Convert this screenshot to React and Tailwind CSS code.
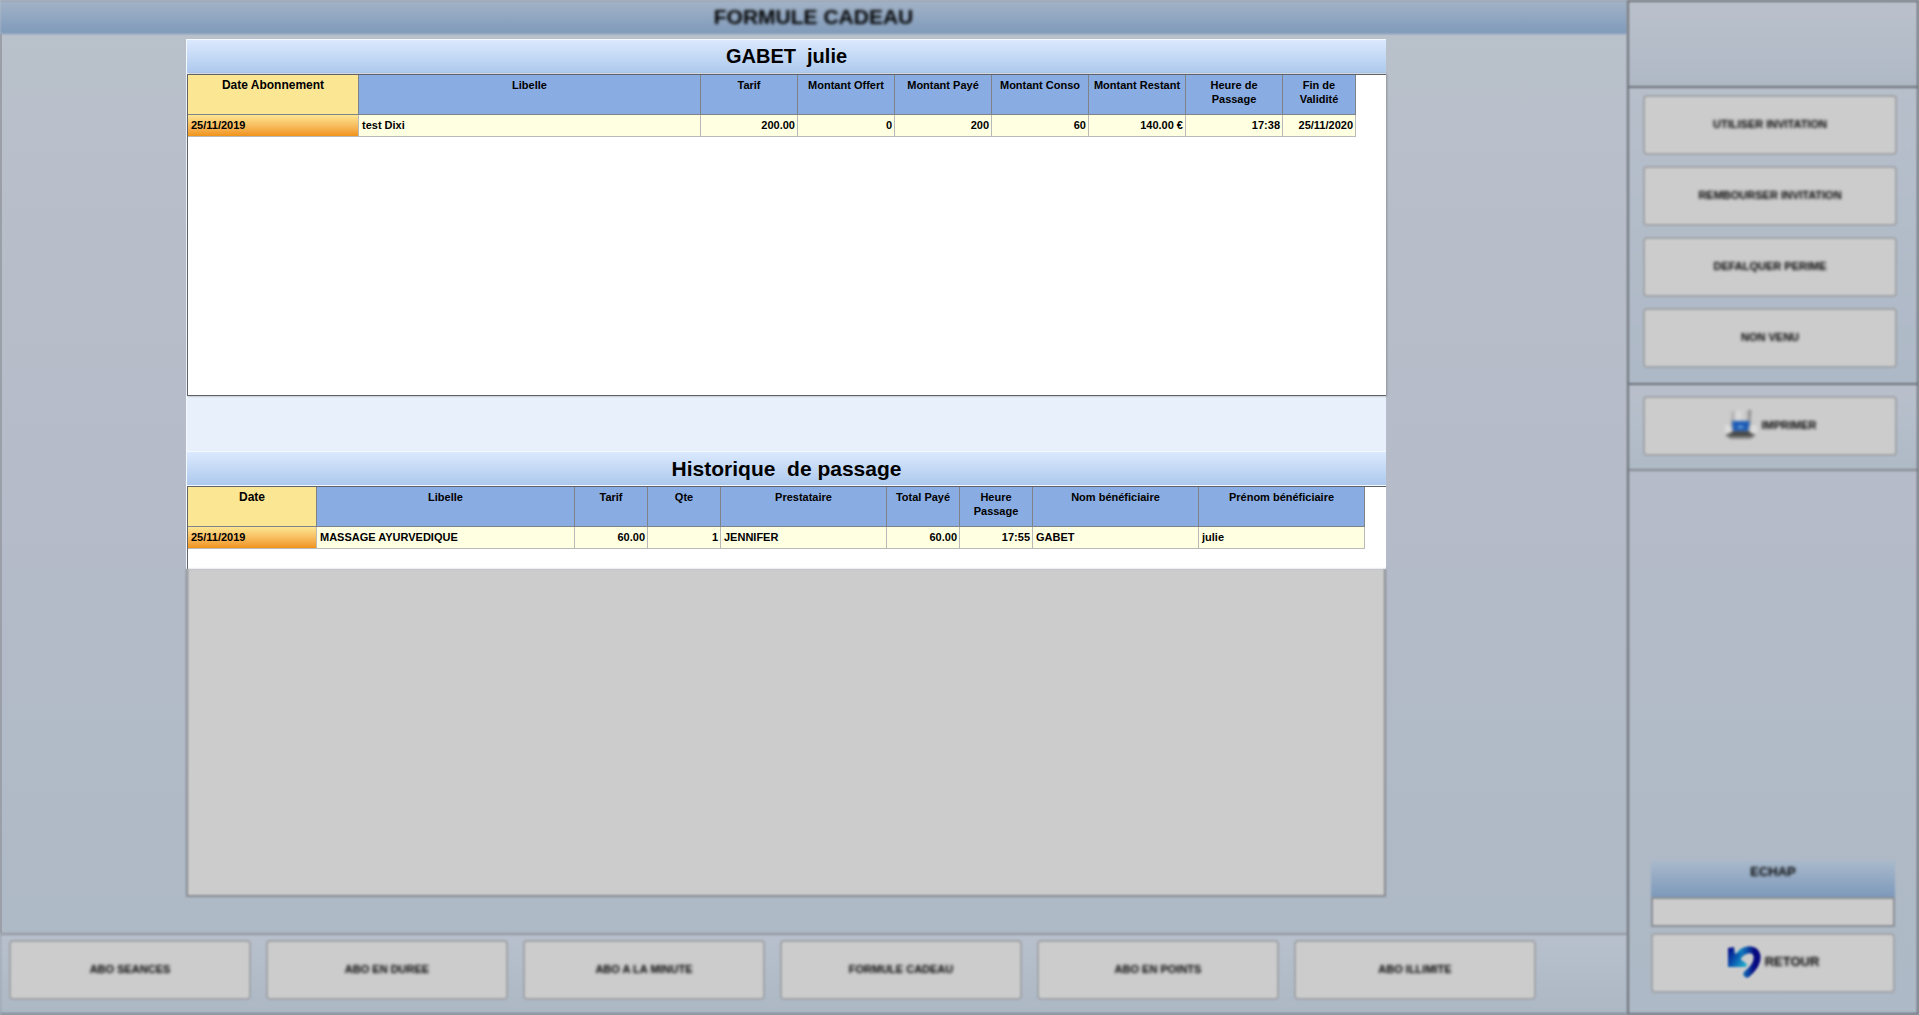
import clsx from 'clsx';

const subscriptionColumns = [
  { label: 'Date Abonnement', width: 171, sorted: true },
  { label: 'Libelle', width: 342 },
  { label: 'Tarif', width: 97, right: true },
  { label: 'Montant Offert', width: 97, right: true },
  { label: 'Montant Payé', width: 97, right: true },
  { label: 'Montant Conso', width: 97, right: true },
  { label: 'Montant Restant', width: 97, right: true },
  { label: 'Heure de Passage', width: 97, right: true },
  { label: 'Fin de Validité', width: 73, right: true },
];

const subscriptionRows = [
  ['25/11/2019', 'test Dixi', '200.00', '0', '200', '60', '140.00 €', '17:38', '25/11/2020'],
];

const historyColumns = [
  { label: 'Date', width: 129, sorted: true },
  { label: 'Libelle', width: 258 },
  { label: 'Tarif', width: 73, right: true },
  { label: 'Qte', width: 73, right: true },
  { label: 'Prestataire', width: 166 },
  { label: 'Total Payé', width: 73, right: true },
  { label: 'Heure Passage', width: 73, right: true },
  { label: 'Nom bénéficiaire', width: 166 },
  { label: 'Prénom bénéficiaire', width: 166 },
];

const historyRows = [
  ['25/11/2019', 'MASSAGE AYURVEDIQUE', '60.00', '1', 'JENNIFER', '60.00', '17:55', 'GABET', 'julie'],
];

const tabs = ['ABO SEANCES', 'ABO EN DUREE', 'ABO A LA MINUTE', 'FORMULE CADEAU', 'ABO EN POINTS', 'ABO ILLIMITE'];
const actions = ['UTILISER INVITATION', 'REMBOURSER INVITATION', 'DEFALQUER PERIME', 'NON VENU'];

function PanelTitle({ children, className }) {
  return (
    <h2
      className={clsx(
        'h-[35px] border-y border-[#f4f8ff] bg-linear-to-b from-[#dbe9fe] to-[#adc9ed] text-center leading-[33px] font-bold whitespace-pre text-black',
        className
      )}
    >
      {children}
    </h2>
  );
}

function DataTable({ label, columns, rows }) {
  const total = columns.reduce((sum, col) => sum + col.width, 0);

  return (
    <table
      aria-label={label}
      className="table-fixed border-separate border-spacing-0 text-[11px] leading-[14px] font-bold text-black"
      style={{ width: total }}
    >
      <colgroup>
        {columns.map((col) => (
          <col key={col.label} style={{ width: col.width }} />
        ))}
      </colgroup>
      <thead>
        <tr className="h-[40px]">
          {columns.map((col) => (
            <th
              key={col.label}
              className={clsx(
                'border-r border-b border-[#7f8287] px-1 pt-[3px] align-top',
                col.sorted ? 'bg-[#fbe694] text-[12px]' : 'bg-[#89ace2]'
              )}
            >
              {col.label}
            </th>
          ))}
        </tr>
      </thead>
      <tbody>
        {rows.map((row, i) => (
          <tr key={i} className="h-[22px]">
            {row.map((value, j) => (
              <td
                key={j}
                className={clsx(
                  'border-r border-b border-[#b9b9b9] pr-[2px] pb-[2px] pl-[3px] whitespace-nowrap',
                  columns[j].right && 'text-right',
                  columns[j].sorted ? 'bg-linear-to-b from-[#fce692] to-[#f09416]' : 'bg-[#ffffe1]'
                )}
              >
                {value}
              </td>
            ))}
          </tr>
        ))}
      </tbody>
    </table>
  );
}

function ActionButton({ icon, children, className }) {
  return (
    <button
      type="button"
      className={clsx(
        'flex h-[60px] w-full items-center justify-center gap-1 rounded-sm border-2 border-[#a2a5a9] bg-[#cccccc] pb-[2px] font-bold text-black',
        className
      )}
    >
      {icon}
      <span className="blur-[1px]">{children}</span>
    </button>
  );
}

function PrinterIcon() {
  return (
    <svg width="34" height="34" viewBox="0 0 34 34" aria-hidden="true" className="blur-[1px]">
      <defs>
        <linearGradient id="paper" x1="0" y1="0" x2="1" y2="0">
          <stop offset="0" stopColor="#999" />
          <stop offset="0.3" stopColor="#dedede" />
          <stop offset="0.8" stopColor="#c4c4c4" />
          <stop offset="1" stopColor="#666" />
        </linearGradient>
        <linearGradient id="tray" x1="0" y1="0" x2="0" y2="1">
          <stop offset="0" stopColor="#c9c9c9" />
          <stop offset="0.5" stopColor="#333" />
          <stop offset="1" stopColor="#999" />
        </linearGradient>
      </defs>
      <path d="M8 3 L27 2 L26 18 L7 18 Z" fill="url(#paper)" />
      <path d="M2 18 L7 15 H28 L32 19 V27 L27 31 H6 L1 27 Z" fill="#b4b4b4" />
      <path d="M5 20 H29 L31 27 L26 31 H7 L2 27 Z" fill="url(#tray)" />
      <path d="M8 13 H26 L24 23 H9 Z" fill="#1d5cb6" />
      <path d="M14 18 H19 V20 H14 Z" fill="#7db1e2" />
      <path d="M1 17 L5 16 L9 23 L5 26 L1 26 Z" fill="#dcdcdc" />
      <path d="M28 16 L33 18 V26 L28 26 L25 23 Z" fill="#dcdcdc" />
    </svg>
  );
}

function ReturnIcon() {
  return (
    <svg width="34" height="34" viewBox="0 0 34 34" aria-hidden="true">
      <defs>
        <linearGradient id="head" x1="0" y1="0.2" x2="1" y2="0.9">
          <stop offset="0" stopColor="#06108a" />
          <stop offset="0.5" stopColor="#0a62b4" />
          <stop offset="1" stopColor="#25b4d0" />
        </linearGradient>
        <linearGradient id="tail" x1="0" y1="0.5" x2="1" y2="0.5">
          <stop offset="0" stopColor="#1a9fc9" />
          <stop offset="0.5" stopColor="#0b4fa9" />
          <stop offset="0.85" stopColor="#070a80" />
        </linearGradient>
      </defs>
      <path d="M10 14 C14 4 28 1 30 11 C31 18 26 24 20 29" fill="none" stroke="url(#tail)" strokeWidth="7" strokeLinecap="round" />
      <path d="M1 3 L7 2 L8 9 L14 7 L13 14 L20 19 L19 22 H1 Z" fill="url(#head)" />
    </svg>
  );
}

export default function App() {
  return (
    <div className="flex min-h-screen overflow-hidden bg-linear-to-b from-[#b9c1cb] via-[#b5bbc8] to-[#adb9c6] font-['Liberation_Sans',Arial,sans-serif]">
      <main className="flex min-w-0 flex-1 flex-col">
        <h1 className="h-[34px] border-t border-[#8d949e] bg-linear-to-b from-[#a3b3c7] to-[#7f9aba] text-center text-[21px] leading-[32px] font-bold text-black blur-[1px]">
          <span className="inline-block blur-[1px]">FORMULE CADEAU</span>
        </h1>

        <div className="flex flex-1 flex-col border-l-2 border-[#9a9fa8] pt-[5px] pr-[241px] pb-[36px] pl-[184px]">
          <section className="border-l border-[#f4f8ff] bg-[#e8f0fc] pb-[55px]">
            <PanelTitle className="text-[20px]">GABET  julie</PanelTitle>
            <div className="min-h-[322px] border-y border-l border-[#5f6266] bg-white shadow-[1px_0_2px_#8f949b]">
              <DataTable label="Abonnements" columns={subscriptionColumns} rows={subscriptionRows} />
            </div>
          </section>

          <section className="flex flex-1 flex-col">
            <div className="border-l border-[#f4f8ff]">
              <PanelTitle className="text-[21px]">Historique  de passage</PanelTitle>
              <div className="h-[83px] border-t border-l border-[#5f6266] bg-white">
                <DataTable label="Historique de passage" columns={historyColumns} rows={historyRows} />
              </div>
            </div>
            <div className="flex-1 border-x-2 border-b-2 border-[#878b92] bg-[#cccccc] blur-[1px]" />
          </section>
        </div>

        <nav className="grid grid-cols-6 gap-[15px] border-t-2 border-b-2 border-l border-t-[#92979f] border-b-[#7c858e] border-l-[#949aa3] bg-linear-to-b from-[#b8c0cd] to-[#adb8c5] pt-[5px] pr-[91px] pb-[13px] pl-[8px] blur-[1px]">
          {tabs.map((tab) => (
            <ActionButton key={tab} className="text-[11px]">
              {tab}
            </ActionButton>
          ))}
        </nav>
      </main>

      <aside className="flex w-[292px] shrink-0 flex-col border-2 border-[#6b7076] blur-[1px]">
        <div className="h-[84px] bg-linear-to-b from-[#bac1cc] to-[#afb9c5]" />
        <div className="flex flex-col gap-[11px] border-y-2 border-[#6b7076] bg-linear-to-b from-[#b7bfcb] to-[#aeb9c7] pt-[7px] pr-[20px] pb-[15px] pl-[14px]">
          {actions.map((action) => (
            <ActionButton key={action} className="text-[11px]">
              {action}
            </ActionButton>
          ))}
        </div>
        <div className="border-b-2 border-[#83888e] bg-linear-to-b from-[#b9c0cc] to-[#afbac7] pt-[11px] pr-[20px] pb-[13px] pl-[14px]">
          <ActionButton icon={<PrinterIcon />} className="text-[11px]">
            IMPRIMER
          </ActionButton>
        </div>

        <div className="mt-auto flex flex-col px-[22px] pb-[20px]">
          <label
            htmlFor="echap"
            className="h-[36px] bg-linear-to-b from-[#a9b9cb] to-[#7d99bb] pt-[1px] text-center text-[13px] leading-[20px] font-bold text-black"
          >
            <span className="inline-block blur-[1px]">ECHAP</span>
          </label>
          <input id="echap" type="text" className="mb-[6px] h-[30px] w-full border-2 border-[#8b8f95] bg-[#cccccc] px-2 text-[13px]" />
          <ActionButton icon={<ReturnIcon />} className="text-[13px]">
            RETOUR
          </ActionButton>
        </div>
      </aside>
    </div>
  );
}
